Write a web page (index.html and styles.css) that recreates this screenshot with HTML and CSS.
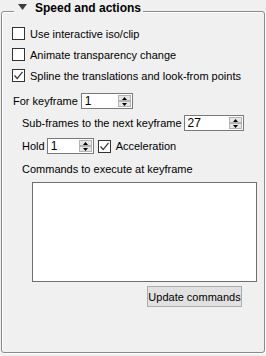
FILE: index.html
```html
<!DOCTYPE html>
<html>
<head>
<meta charset="utf-8">
<link rel="stylesheet" href="styles.css">
</head>
<body>
<div class="group">
  <div class="title">
    <svg class="tri" width="9" height="6" viewBox="0 0 9 6"><path d="M0 0H9L4.5 6Z" fill="#3c3c3c"/></svg>
    <span>Speed and actions</span>
  </div>
  <div class="body">
    <div class="check"><span class="box"></span><span>Use interactive iso/clip</span></div>
    <div class="check"><span class="box"></span><span>Animate transparency change</span></div>
    <div class="check"><span class="box"><svg width="11" height="11" viewBox="0 0 11 11"><path d="M1.5 5.5L4.2 8.5L9.5 1.8" fill="none" stroke="#333" stroke-width="1.2"/></svg></span><span>Spline the translations and look-from points</span></div>
    <div class="row r-key"><span>For keyframe</span>
      <div class="spin w-key"><span class="val">1</span><div class="arrows"><span class="ab"><svg width="5" height="3" viewBox="0 0 5 3"><path d="M0 3H5L2.5 0Z" fill="#000"/></svg></span><span class="ab"><svg width="5" height="3" viewBox="0 0 5 3"><path d="M0 0H5L2.5 3Z" fill="#000"/></svg></span></div></div>
    </div>
    <div class="indent">
      <div class="row r-sub"><span>Sub-frames to the next keyframe</span>
        <div class="spin w-sub"><span class="val">27</span><div class="arrows"><span class="ab"><svg width="5" height="3" viewBox="0 0 5 3"><path d="M0 3H5L2.5 0Z" fill="#000"/></svg></span><span class="ab"><svg width="5" height="3" viewBox="0 0 5 3"><path d="M0 0H5L2.5 3Z" fill="#000"/></svg></span></div></div>
      </div>
      <div class="row r-hold"><span>Hold</span>
        <div class="spin w-hold"><span class="val">1</span><div class="arrows"><span class="ab"><svg width="5" height="3" viewBox="0 0 5 3"><path d="M0 3H5L2.5 0Z" fill="#000"/></svg></span><span class="ab"><svg width="5" height="3" viewBox="0 0 5 3"><path d="M0 0H5L2.5 3Z" fill="#000"/></svg></span></div></div>
        <div class="check inline"><span class="box"><svg width="11" height="11" viewBox="0 0 11 11"><path d="M1.5 5.5L4.2 8.5L9.5 1.8" fill="none" stroke="#333" stroke-width="1.2"/></svg></span><span>Acceleration</span></div>
      </div>
      <div class="cmdlabel">Commands to execute at keyframe</div>
      <div class="textarea"></div>
      <div class="btnrow"><span class="button">Update commands</span></div>
    </div>
  </div>
</div>
</body>
</html>
```
FILE: styles.css
```css
* { box-sizing: border-box; }
html, body { margin: 0; padding: 0; }
body {
  width: 266px;
  height: 356px;
  background: #f0f0f0;
  font-family: "Liberation Sans", Arial, sans-serif;
  font-size: 11px;
  color: #000;
  overflow: hidden;
}
.group {
  position: relative;
  margin: 11px 1px 0 1px;
  width: 264px;
  height: 342px;
  border: 1px solid #8a8a8a;
  border-radius: 3px;
  box-shadow: inset 1px 1px 0 #fff, 1px 1px 0 #fff;
}
.title {
  position: absolute;
  left: 12px;
  top: -11px;
  height: 16px;
  padding: 0 2px 0 4px;
  background: #f0f0f0;
  display: flex;
  align-items: center;
  font-weight: bold;
  font-size: 12px;
}
.tri { margin-right: 8px; margin-top: -4px; }
.title span { margin-top: -2px; }
.body {
  padding: 15px 0 0 10px;
  display: flex;
  flex-direction: column;
}
.check {
  display: flex;
  align-items: center;
  height: 13px;
  margin-bottom: 8px;
  white-space: nowrap;
}
.check.inline { margin: 0 0 0 4px; }
.box {
  width: 13px;
  height: 13px;
  border: 1px solid #333;
  background: #fff;
  margin-right: 5px;
  display: flex;
  align-items: center;
  justify-content: center;
  flex: none;
}
.row {
  display: flex;
  align-items: center;
  height: 16px;
  white-space: nowrap;
}
.r-key { margin-top: 3px; padding-left: 1px; }
.r-key .spin { margin-left: 3px; }
.indent { padding-left: 10px; display: flex; flex-direction: column; }
.r-sub { margin-top: 6px; }
.r-sub .spin { margin-left: 2px; }
.r-hold { margin-top: 7px; }
.r-hold .spin { margin-left: 2px; }
.spin {
  height: 16px;
  border: 1px solid #7a7a7a;
  background: #fff;
  display: flex;
  align-items: stretch;
}
.w-key { width: 52px; }
.w-sub { width: 60px; }
.w-hold { width: 47px; }
.val { flex: 1; padding-left: 3px; line-height: 14px; font-size: 12px; }
.arrows {
  width: 14px;
  display: flex;
  flex-direction: column;
  padding: 1px 1px 1px 0;
  gap: 0;
}
.ab {
  flex: 1;
  background: #e6e6e6;
  border: 1px solid #b4b4b4;
  display: flex;
  align-items: center;
  justify-content: center;
}
.cmdlabel { margin-top: 8px; height: 14px; line-height: 14px; }
.textarea {
  margin: 6px 0 0 10px;
  width: 225px;
  height: 100px;
  border: 1px solid #6f6f6f;
  background: #fff;
}
.btnrow { display: flex; padding-left: 125px; margin-top: 4px; }
.button {
  width: 95px;
  height: 21px;
  border: 1px solid #adadad;
  background: #e1e1e1;
  display: flex;
  align-items: center;
  justify-content: center;
  white-space: nowrap;
}
```
